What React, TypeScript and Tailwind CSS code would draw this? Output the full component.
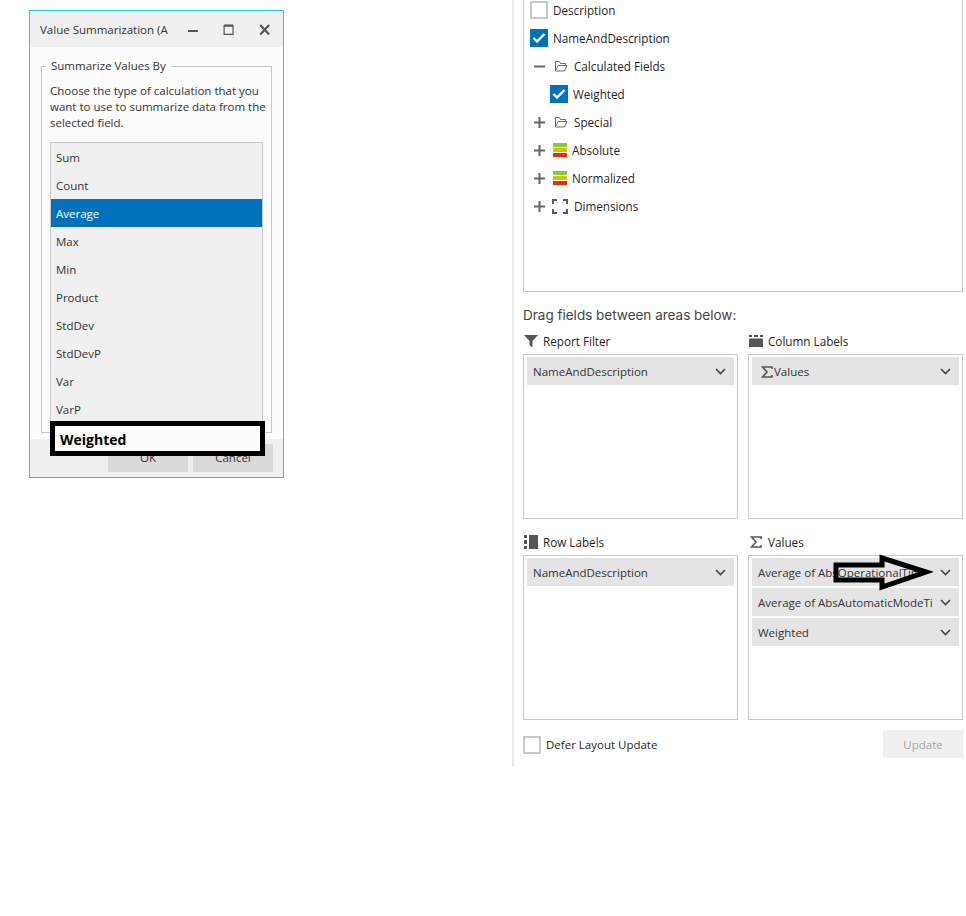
import React from "react";

function Chevron() {
  return (
    <svg width="11" height="7" viewBox="0 0 11 7" className="shrink-0">
      <path d="M1 1l4.5 4.5L10 1" fill="none" stroke="#444" strokeWidth="1.6" />
    </svg>
  );
}

function Check({ className }: { className: string }) {
  return (
    <span className={`flex h-[18px] w-[18px] shrink-0 items-center justify-center bg-[#0072bc] ${className}`}>
      <svg width="14" height="12" viewBox="0 0 14 12">
        <path d="M1.5 6l3.5 3.5L12.5 2" fill="none" stroke="#fff" strokeWidth="2.4" />
      </svg>
    </span>
  );
}

function Expander({ minus }: { minus?: boolean }) {
  return (
    <svg width="11" height="11" viewBox="0 0 11 11" className="shrink-0">
      <path d={minus ? "M0 5.5h11" : "M0 5.5h11M5.5 0v11"} stroke="#666" strokeWidth="2" />
    </svg>
  );
}

function Folder() {
  return (
    <svg width="14" height="12" viewBox="0 0 14 12" className="shrink-0">
      <path d="M1.5 11V1.5h4l1 2h5v2M1.5 11h9l2.5-5.5H4L1.5 11z" fill="none" stroke="#6b6b6b" strokeWidth="1" />
    </svg>
  );
}

function Bars() {
  return (
    <span className="flex h-[14px] w-[14px] shrink-0 flex-col gap-px">
      <span className="h-[4px] bg-[#8cc63f]" />
      <span className="h-[4px] bg-[#c8c800]" />
      <span className="h-[4px] bg-[#e82c0c]" />
    </span>
  );
}

function Corners() {
  return (
    <svg width="16" height="15" viewBox="0 0 16 15" className="shrink-0">
      <path d="M1 5V1h4M11 1h4v4M15 10v4h-4M5 14H1v-4" fill="none" stroke="#5a5a5a" strokeWidth="2" />
    </svg>
  );
}

function TreeRow({ children }: { children: React.ReactNode }) {
  return <div className="flex h-[28px] items-center pb-[2px] text-[11.7px] font-medium text-[#1f1f1f]">{children}</div>;
}

function Field({ label, icon }: { label: string; icon?: React.ReactNode }) {
  return (
    <div className="flex h-[28px] items-center justify-between bg-[#e4e4e4] pl-[6px] pr-[8px]">
      <span className="flex min-w-0 items-center whitespace-nowrap pt-px text-[#333]">
        {icon}
        {label}
      </span>
      <span className="ml-[6px] flex shrink-0"><Chevron /></span>
    </div>
  );
}

function Area({ title, icon, children }: { title: string; icon: React.ReactNode; children: React.ReactNode }) {
  return (
    <div className="flex w-[215px] flex-col">
      <div className="flex h-[24px] items-center gap-[5px] pb-[2px] text-[11.7px] font-medium text-[#1f1f1f]">
        <span className="flex w-[15px] justify-center">{icon}</span>
        {title}
      </div>
      <div className="flex h-[165px] flex-col gap-[2px] border border-[#c8c8c8] bg-white px-[3px] pt-[2px]">{children}</div>
    </div>
  );
}

function Sigma() {
  return (
    <svg width="12" height="12" viewBox="0 0 12 12" className="shrink-0">
      <path d="M11 3V1H1.5l4.5 5-4.5 5H11V9" fill="none" stroke="#555" strokeWidth="1.6" />
    </svg>
  );
}

const items = ["Sum", "Count", "Average", "Max", "Min", "Product", "StdDev", "StdDevP", "Var", "VarP"];

export default function App() {
  return (
    <div className="relative flex h-[916px] w-[966px] overflow-hidden bg-white font-['Open_Sans','Noto_Sans',sans-serif] text-[11.5px] leading-[16px]">
      <div className="w-[512px] shrink-0 pl-[29px] pt-[10px]">
        <div className="relative flex h-[468px] w-[255px] flex-col border border-[#2ec4e6] bg-[#fcfcfc]">
          <div className="flex h-[36px] items-center bg-[#f0f0f0] pl-[10px] pt-px text-[#333]">
            <span className="w-[125px] whitespace-nowrap">Value Summarization (A</span>
            <svg width="96" height="14" viewBox="0 0 96 14" className="ml-[23px]">
              <path d="M0 8h10" stroke="#555" strokeWidth="2" />
              <path d="M36.5 2.5h9v9h-9z" fill="none" stroke="#555" strokeWidth="1.2" />
              <path d="M36.5 2.5h9" stroke="#555" strokeWidth="2.2" />
              <path d="M73 2l9 9.5M82 2l-9 9.5" stroke="#555" strokeWidth="2.2" />
            </svg>
          </div>
          <div className="relative mx-[11px] mt-[19px] h-[367px] w-[231px] border border-[#c8c8c8] pl-[8px] pt-[16px]">
            <span className="absolute left-[4px] top-[-9px] bg-[#fcfcfc] px-[5px] text-[#333]">Summarize Values By</span>
            <p className="w-[218px] leading-[16px] text-[#333]">Choose the type of calculation that you want to use to summarize data from the selected field.</p>
            <div className="mt-[11px] h-[290px] w-[213px] overflow-hidden border border-[#c8c8c8] bg-[#f0f0f0]">
              {items.map((it) => (
                <div
                  key={it}
                  className={`flex h-[28px] items-center pl-[5px] pt-[2px] ${it === "Average" ? "bg-[#0072bc] text-white" : "text-[#333]"}`}
                >
                  {it}
                </div>
              ))}
            </div>
          </div>
          <div className="mt-auto flex h-[38px] justify-end gap-[5px] bg-[#f0f0f0] pr-[10px] pt-[5px]">
            <div className="flex h-[28px] w-[80px] items-center justify-center bg-[#d9d9d9] text-[#333]">OK</div>
            <div className="flex h-[28px] w-[80px] items-center justify-center bg-[#d9d9d9] text-[#333]">Cancel</div>
          </div>
          <div className="absolute left-[20px] top-[410px] flex h-[35px] w-[215px] items-center border-[5px] border-black bg-[#fcfcfc] pl-[5px] pt-[3px] text-[14px] font-bold text-black">
            Weighted
          </div>
        </div>
      </div>

      <div className="flex h-[767px] w-[454px] shrink-0 flex-col border-l-2 border-[#ececec] pl-[9px] pr-[3px]">
        <div className="mt-[-4px] h-[296px] w-[440px] shrink-0 border-x border-b border-[#c8c8c8] px-[6px] pt-px">
          <TreeRow>
            <span className="mr-[5px] h-[18px] w-[18px] border-2 border-[#c8c8c8] bg-white" />
            Description
          </TreeRow>
          <TreeRow>
            <Check className="mr-[5px]" />
            NameAndDescription
          </TreeRow>
          <TreeRow>
            <span className="ml-[4px] mr-[9px] flex"><Expander minus /></span>
            <span className="mr-[6px] flex"><Folder /></span>
            Calculated Fields
          </TreeRow>
          <TreeRow>
            <Check className="ml-[20px] mr-[5px]" />
            Weighted
          </TreeRow>
          <TreeRow>
            <span className="ml-[4px] mr-[9px] flex"><Expander /></span>
            <span className="mr-[6px] flex"><Folder /></span>
            Special
          </TreeRow>
          <TreeRow>
            <span className="ml-[4px] mr-[8px] flex"><Expander /></span>
            <span className="mr-[5px] flex"><Bars /></span>
            Absolute
          </TreeRow>
          <TreeRow>
            <span className="ml-[4px] mr-[8px] flex"><Expander /></span>
            <span className="mr-[5px] flex"><Bars /></span>
            Normalized
          </TreeRow>
          <TreeRow>
            <span className="ml-[4px] mr-[7px] flex"><Expander /></span>
            <span className="mr-[6px] flex"><Corners /></span>
            Dimensions
          </TreeRow>
        </div>

        <div className="mt-[13px] h-[20px] font-['Inter',sans-serif] text-[13.5px] leading-[20px] text-[#444]">Drag fields between areas below:</div>
        <div className="mt-[5px] grid grid-cols-[215px_215px] gap-x-[10px] gap-y-[12px]">
          <Area
            title="Report Filter"
            icon={
              <svg width="14" height="14" viewBox="0 0 14 14">
                <path d="M0 1h14L8.5 7v6.5L5.5 11V7z" fill="#555" />
              </svg>
            }
          >
            <Field label="NameAndDescription" />
          </Area>
          <Area
            title="Column Labels"
            icon={
              <svg width="14" height="12" viewBox="0 0 14 12">
                <path d="M0 0h3v2H0zM5 0h4v2H5zM11 0h3v2h-3zM0 3.5h14V12H0z" fill="#555" />
              </svg>
            }
          >
            <Field label="Values" icon={<span className="ml-[3px] mr-px flex"><Sigma /></span>} />
          </Area>
          <Area
            title="Row Labels"
            icon={
              <svg width="14" height="14" viewBox="0 0 14 14">
                <path d="M0 0h3v3H0zM0 5h3v4H0zM0 11h3v3H0zM5 0h9v14H5z" fill="#555" />
              </svg>
            }
          >
            <Field label="NameAndDescription" />
          </Area>
          <Area title="Values" icon={<Sigma />}>
            <Field label="Average of AbsOperationalTim" />
            <Field label="Average of AbsAutomaticModeTi" />
            <Field label="Weighted" />
          </Area>
        </div>
        <div className="mt-[10px] flex items-start justify-between">
          <div className="mt-[6px] flex items-center gap-[5px] text-[#1f1f1f]">
            <span className="h-[18px] w-[18px] border-2 border-[#c8c8c8] bg-white" />
            Defer Layout Update
          </div>
          <div className="flex h-[28px] w-[80px] items-center justify-center bg-[#f0f0f0] pt-px text-[#a6a6a6]">Update</div>
        </div>
      </div>

      <svg width="100" height="40" viewBox="0 0 100 40" className="absolute left-[833px] top-[553px]">
        <path d="M3 12h46V5l44 14-44 15v-7H3z" fill="none" stroke="#000" strokeWidth="5" />
      </svg>
    </div>
  );
}
